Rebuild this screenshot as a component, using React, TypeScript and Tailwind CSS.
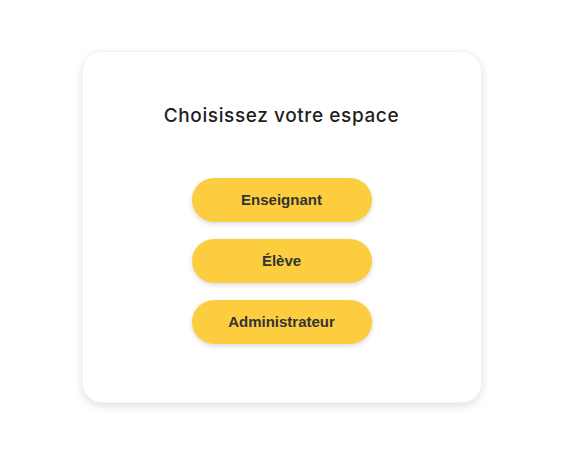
const roles = ["Enseignant", "Élève", "Administrateur"];

export default function App() {
  return (
    <div className="min-h-screen bg-white flex justify-center pt-[51px] pl-[2px]">
      <div className="w-[400px] h-[352px] rounded-[20px] bg-white shadow-[0_3px_8px_rgba(0,0,0,0.12)] border border-[#f3f3f3] flex flex-col items-center pt-[50px]">
        <h1 className="text-[19px] leading-[27px] font-medium text-[#1f1f1f] font-['Inter',sans-serif] tracking-[0.6px]">
          Choisissez votre espace
        </h1>
        <div className="mt-[49px] flex flex-col gap-[17px]">
          {roles.map((r) => (
            <button
              key={r}
              className="w-[180px] h-[44px] rounded-full bg-[#fdcd40] shadow-[0_2px_5px_rgba(0,0,0,0.15)] text-[15px] font-bold text-[#333333] font-['Liberation_Sans',Arial,sans-serif]"
            >
              {r}
            </button>
          ))}
        </div>
      </div>
    </div>
  );
}
